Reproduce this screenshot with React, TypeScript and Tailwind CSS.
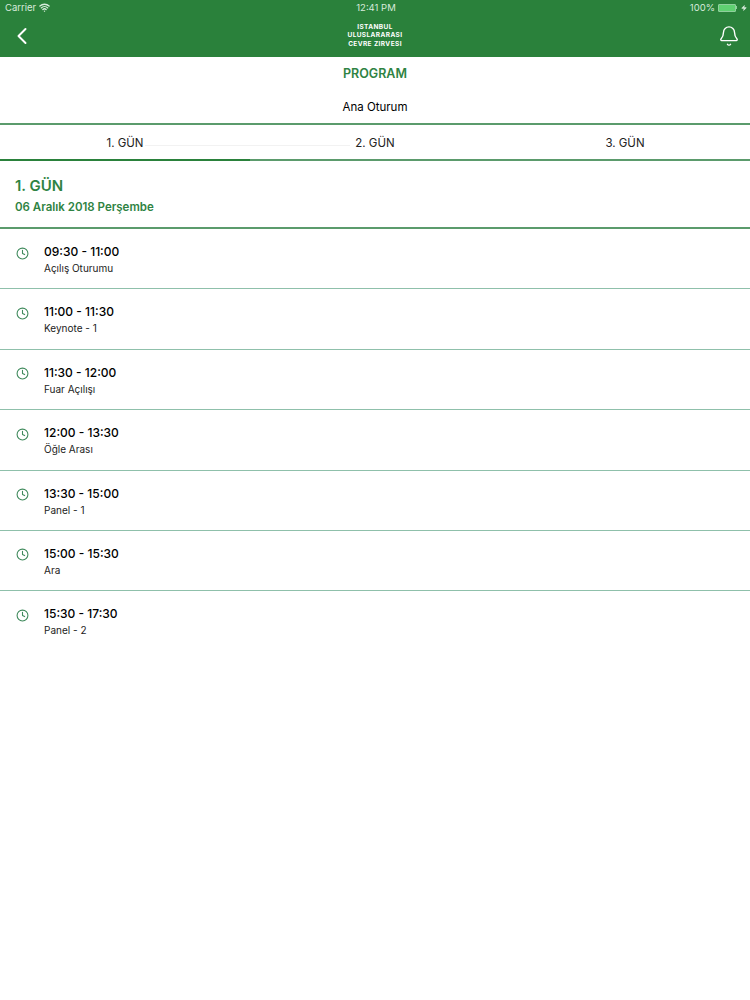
import { Bell, ChevronLeft, Clock, Wifi, Zap } from 'lucide-react';

const sessions = [
  { time: '09:30 - 11:00', title: 'Açılış Oturumu' },
  { time: '11:00 - 11:30', title: 'Keynote - 1' },
  { time: '11:30 - 12:00', title: 'Fuar Açılışı' },
  { time: '12:00 - 13:30', title: 'Öğle Arası' },
  { time: '13:30 - 15:00', title: 'Panel - 1' },
  { time: '15:00 - 15:30', title: 'Ara' },
  { time: '15:30 - 17:30', title: 'Panel - 2' },
];

const days = ['1. GÜN', '2. GÜN', '3. GÜN'];

export default function App() {
  return (
    <div className="min-h-[1000px] w-[750px] bg-white font-['Inter',sans-serif] text-black">
      {/* Header */}
      <header className="h-[57px] bg-[#2a813b] text-white">
        <div className="grid h-[15px] grid-cols-3 items-center pl-[5px] pr-[3px] text-[9.5px] leading-none text-[#d8ebdc]">
          <div className="flex items-center gap-[3px]">
            <span>Carrier</span>
            <Wifi className="h-[11px] w-[11px]" strokeWidth={3} />
          </div>
          <div className="text-center">12:41 PM</div>
          <div className="flex items-center justify-end gap-[3px]">
            <span>100%</span>
            <div className="flex items-center">
              <div className="h-[8px] w-[18px] rounded-[1px] border border-[#8fd09c] bg-[#5fd071]" />
              <div className="h-[3px] w-[1px] bg-[#8fd09c]" />
            </div>
            <Zap className="ml-[1px] h-[6px] w-[6px] fill-current" />
          </div>
        </div>
        <div className="grid h-[42px] grid-cols-[1fr_auto_1fr] items-center px-[8px]">
          <ChevronLeft className="h-[28px] w-[28px]" strokeWidth={1.7} />
          <div className="mt-[-1px] text-center text-[6.5px] font-bold leading-[8.5px] tracking-[0.4px]">
            <div>ISTANBUL</div>
            <div>ULUSLARARASI</div>
            <div>CEVRE ZIRVESI</div>
          </div>
          <Bell className="mr-[2px] h-[22px] w-[22px] justify-self-end" strokeWidth={1.5} />
        </div>
      </header>

      {/* Title */}
      <div className="flex h-[66px] flex-col items-center pt-[9px]">
        <div className="text-[12.5px] font-semibold leading-[16px] text-[#2f8343]">PROGRAM</div>
        <div className="mt-[18px] text-[11.5px] leading-[14px]">Ana Oturum</div>
      </div>

      {/* Tabs */}
      <div className="relative grid h-[38px] grid-cols-3 border-y-2 border-[#5b9b6c]">
        {days.map((day) => (
          <div key={day} className="flex items-center justify-center pt-[4px] text-[11.5px] text-[#222]">
            {day}
          </div>
        ))}
        <div className="absolute left-[145px] top-[20px] h-px w-[205px] bg-[#f2f2f2]" />
        <div className="absolute bottom-[-2px] left-0 h-[2px] w-[250px] bg-[#2a813b]" />
      </div>

      {/* Day heading */}
      <div className="h-[68px] border-b-2 border-[#5b9b6c] pl-[15px] pt-[16px] text-[#2f8343]">
        <div className="text-[15px] font-semibold leading-[18px]">1. GÜN</div>
        <div className="mt-[5px] text-[11.5px] font-semibold leading-[15px]">06 Aralık 2018 Perşembe</div>
      </div>

      {/* Sessions */}
      {sessions.map((session, index) => (
        <div
          key={session.time}
          className={`flex h-[60.4px] gap-[15px] pl-[16px] pt-[15px] ${index < sessions.length - 1 ? 'border-b border-[#8fc0ab]' : ''}`}
        >
          <Clock className="mt-[2.5px] h-[13px] w-[13px] text-[#3f8a5c]" strokeWidth={2} />
          <div>
            <div className="text-[12px] font-medium leading-[15px]">{session.time}</div>
            <div className="mt-[3px] text-[10px] leading-[13px] text-[#222]">{session.title}</div>
          </div>
        </div>
      ))}
    </div>
  );
}
